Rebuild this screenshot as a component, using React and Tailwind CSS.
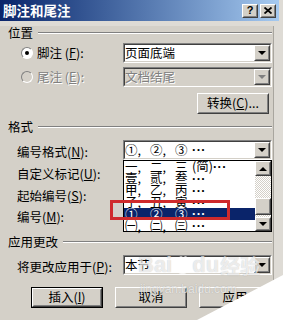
import React from 'react';

const font = { fontFamily: '"Noto Sans CJK SC", "Liberation Sans", sans-serif' };
const latin = { fontFamily: '"Liberation Sans", sans-serif' };

const Raised = ({ className = '', children }) => (
  <div className={`border border-t-white border-l-white border-r-[#404040] border-b-[#404040] bg-[#d4d0c8] ${className}`}>
    <div className="h-full w-full border border-t-[#d4d0c8] border-l-[#d4d0c8] border-r-[#808080] border-b-[#808080] flex items-center justify-center">
      {children}
    </div>
  </div>
);

const Down = ({ gray }) => (
  <div className={`w-0 h-0 border-l-[4px] border-r-[4px] border-t-[4px] border-l-transparent border-r-transparent ${gray ? 'border-t-[#808080]' : 'border-t-black'}`} />
);

const Up = () => (
  <div className="w-0 h-0 border-l-[4px] border-r-[4px] border-b-[4px] border-l-transparent border-r-transparent border-b-black" />
);

const Select = ({ children, disabled }) => (
  <div className="w-[149px] h-[20px] border border-t-[#808080] border-l-[#808080] border-r-white border-b-white">
    <div className={`h-full border border-t-[#404040] border-l-[#404040] border-r-[#d4d0c8] border-b-[#d4d0c8] flex items-center ${disabled ? 'bg-[#d4d0c8]' : 'bg-white'}`}>
      <div className={`flex-1 flex items-center text-[12.5px] leading-none ${disabled ? 'text-[#808080] [text-shadow:1px_1px_0_#fff]' : 'text-black'}`}>
        {children}
      </div>
      <Raised className="w-[16px] h-[16px]">
        <Down gray={disabled} />
      </Raised>
    </div>
  </div>
);

const Header = ({ children, className = '' }) => (
  <div className={`h-[14px] flex items-center ${className}`}>
    <span className="text-[12.5px] leading-none text-black">{children}</span>
    <div className="flex-1 ml-[5px] border-t border-t-[#808080] border-b border-b-white" />
  </div>
);

const Dots = () => (
  <span className="font-bold tracking-[0.5px]" style={latin}>···</span>
);

const Cols = ({ items }) => (
  <div className="flex items-center">
    <span className="w-[25px]">{items[0]},</span>
    <span className="w-[25px]">{items[1]},</span>
    <span className="w-[17px]">{items[2]}</span>
    <span>{items[3]}<Dots /></span>
  </div>
);

const rows = [
  ['一', '二', '三', '(简)'],
  ['壹', '贰', '叁', ''],
  ['甲', '乙', '丙', ''],
  ['子', '丑', '寅', ''],
  ['①', '②', '③', ''],
  ['㈠', '㈡', '㈢', ''],
];

const Radio = ({ checked, disabled }) => (
  <div className={`w-[12px] h-[12px] rounded-full border border-t-[#808080] border-l-[#808080] border-r-white border-b-white flex items-center justify-center ${disabled ? 'bg-[#d4d0c8]' : 'bg-white'}`}>
    {checked && <div className="w-[4px] h-[4px] rounded-full bg-black" />}
  </div>
);

const Button = ({ children, isDefault }) => (
  <div className={isDefault ? 'border border-black' : ''}>
    <Raised className={isDefault ? 'w-[70px] h-[19px]' : 'w-[72px] h-[21px]'}>
      <span className="text-[12.5px] leading-none text-black">{children}</span>
    </Raised>
  </div>
);

export default function App() {
  return (
    <div className="w-[283px] h-[320px] relative overflow-hidden bg-[#dedbd5]" style={font}>
      <div className="w-[279px]">
        <div className="h-[21px] flex items-center bg-linear-to-r from-[#0a246a] to-[#a6caf0] pl-[3px] pr-[3px]">
          <span className="text-white font-bold text-[13.5px] leading-none">脚注和尾注</span>
          <div className="ml-auto flex gap-[2px]">
            <Raised className="w-[16px] h-[14px]">
              <span className="text-[11px] font-bold leading-none text-black" style={latin}>?</span>
            </Raised>
            <Raised className="w-[16px] h-[14px]">
              <svg width="8" height="7" viewBox="0 0 8 7">
                <path d="M0.5 0.5 L7.5 6.5 M7.5 0.5 L0.5 6.5" stroke="black" strokeWidth="1.8" />
              </svg>
            </Raised>
          </div>
        </div>
      </div>

      <div className="w-[274px] h-[299px] bg-[#d4d0c8] border-r border-r-[#a9a69f] pl-[8px] pr-[1px]">
        <Header className="mt-[5px]">位置</Header>

        <div className="mt-[3px] h-[20px] flex items-center">
          <div className="w-[115px] flex items-center pl-[13px] gap-[4px]">
            <Radio checked />
            <span className="text-[12.5px] leading-none text-black">脚注 (<u>F</u>):</span>
          </div>
          <Select>页面底端</Select>
        </div>

        <div className="mt-[4px] h-[20px] flex items-center">
          <div className="w-[115px] flex items-center pl-[13px] gap-[4px]">
            <Radio disabled />
            <span className="text-[12.5px] leading-none text-[#808080] [text-shadow:1px_1px_0_#fff]">尾注 (<u>E</u>):</span>
          </div>
          <Select disabled>文档结尾</Select>
        </div>

        <div className="mt-[6px] flex">
          <div className="ml-[189px]">
            <Button>转换(<u>C</u>)...</Button>
          </div>
        </div>

        <Header className="mt-[6px]">格式</Header>

        <div className="mt-[6px] h-[20px] flex items-center">
          <div className="w-[115px] pl-[9px]">
            <span className="text-[12.5px] leading-none text-black">编号格式(<u>N</u>):</span>
          </div>
          <Select>
            <Cols items={['①', '②', '③', '']} />
          </Select>
        </div>

        <div className="relative h-[72px] flex">
          <div className="w-[115px] pl-[9px] flex flex-col text-[12.5px] leading-[14px] text-black">
            <span className="mt-[7px]">自定义标记(<u>U</u>):</span>
            <span className="mt-[8px]">起始编号(<u>S</u>):</span>
            <span className="mt-[7px]">编号(<u>M</u>):</span>
          </div>
          <div className="w-[149px] h-[72px] border border-black bg-white flex">
            <div className="flex-1 flex flex-col text-[12.5px] leading-none">
              {rows.map((r, i) => (
                <div
                  key={i}
                  className={`h-[11.8px] flex items-center pl-[1px] ${i === 4 ? 'bg-[#0a246a] text-white' : 'text-black'}`}
                >
                  <Cols items={r} />
                </div>
              ))}
            </div>
            <div className="w-[16px] flex flex-col">
              <Raised className="w-[16px] h-[15px]">
                <Up />
              </Raised>
              <div className="flex-1 flex flex-col bg-[repeating-conic-gradient(#d4d0c8_0_25%,#ffffff_0_50%)] bg-[length:2px_2px]">
                <div className="h-[22px]" />
                <Raised className="w-[16px] h-[17px]" />
              </div>
              <Raised className="w-[16px] h-[14px]">
                <Down />
              </Raised>
            </div>
          </div>
          <div className="absolute left-[102px] top-[40px] w-[120px] h-[20px] border-[3px] border-[#cf2a2c]" />
        </div>

        <Header className="mt-[3px]">应用更改</Header>

        <div className="mt-[6px] h-[20px] flex items-center">
          <div className="w-[115px] pl-[9px]">
            <span className="text-[12.5px] leading-none text-black">将更改应用于(<u>P</u>):</span>
          </div>
          <Select>本节</Select>
        </div>

        <div className="mt-[12px] flex gap-[12px] pl-[23px]">
          <Button isDefault>插入(<u>I</u>)</Button>
          <Button>取消</Button>
          <Button>应用</Button>
        </div>
      </div>

      <div className="absolute left-[138px] top-[254px] flex items-end text-white/70 font-bold leading-none [text-shadow:0_0_1px_rgba(0,0,0,0.25)]" style={{ fontFamily: '"Liberation Sans", "Noto Sans CJK SC", sans-serif' }}>
        <span className="text-[22px]">Bai</span>
        <svg width="18" height="20" viewBox="0 0 18 20" className="mx-[1px] mb-[1px]">
          <g fill="rgba(255,255,255,0.7)">
            <ellipse cx="4" cy="7" rx="2" ry="2.6" />
            <ellipse cx="8" cy="3.5" rx="2" ry="2.6" />
            <ellipse cx="12.5" cy="3.5" rx="2" ry="2.6" />
            <ellipse cx="15.5" cy="7.5" rx="2" ry="2.6" />
            <path d="M9.5 9 C5 9 3 15 5 17.5 C7 19.5 12 19.5 14 17.5 C16 15 14 9 9.5 9 Z" />
          </g>
        </svg>
        <span className="text-[22px]">du</span>
        <span className="text-[20px] ml-[1px]" style={{ fontFamily: '"Noto Sans CJK SC", sans-serif' }}>经验</span>
      </div>
      <div className="absolute left-[140px] top-[283px] text-[12px] leading-none text-white/70 [text-shadow:0_0_1px_rgba(0,0,0,0.25)]" style={latin}>
        jingyan.baidu.com
      </div>

      <svg className="absolute left-0 top-0" width="283" height="320" viewBox="0 0 283 320">
        <polygon points="197,320 283,275 283,320" fill="#ffffff" />
      </svg>
    </div>
  );
}
